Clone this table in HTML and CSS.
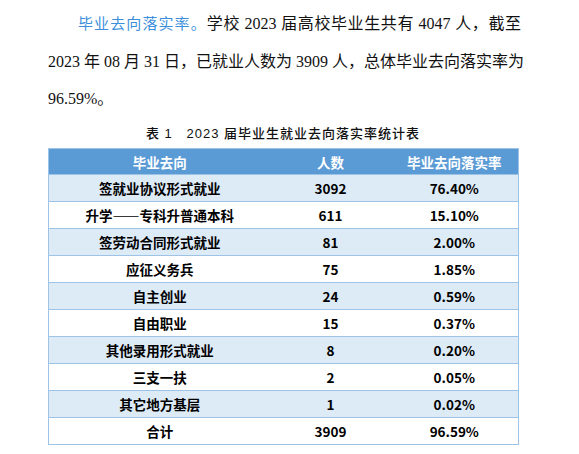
FILE: index.html
```html
<!DOCTYPE html>
<html lang="zh-CN">
<head>
<meta charset="utf-8">
<link rel="stylesheet" href="styles.css">
</head>
<body>
<div class="page">
  <div class="para">
    <div class="line first"><span class="hl">毕业去向落实率。</span>学校 2023 届高校毕业生共有 4047 人，截至</div>
    <div class="line">2023 年 08 月 31 日，已就业人数为 3909 人，总体毕业去向落实率为</div>
    <div class="line last">96.59%。</div>
  </div>
  <div class="caption">表 1&nbsp;&nbsp;&nbsp;2023 届毕业生就业去向落实率统计表</div>
  <table class="stats">
    <colgroup><col class="c1"><col class="c2"><col class="c3"></colgroup>
    <thead>
      <tr><th>毕业去向</th><th>人数</th><th>毕业去向落实率</th></tr>
    </thead>
    <tbody>
      <tr class="alt"><td>签就业协议形式就业</td><td>3092</td><td>76.40%</td></tr>
      <tr><td>升学——专科升普通本科</td><td>611</td><td>15.10%</td></tr>
      <tr class="alt"><td>签劳动合同形式就业</td><td>81</td><td>2.00%</td></tr>
      <tr><td>应征义务兵</td><td>75</td><td>1.85%</td></tr>
      <tr class="alt"><td>自主创业</td><td>24</td><td>0.59%</td></tr>
      <tr><td>自由职业</td><td>15</td><td>0.37%</td></tr>
      <tr class="alt"><td>其他录用形式就业</td><td>8</td><td>0.20%</td></tr>
      <tr><td>三支一扶</td><td>2</td><td>0.05%</td></tr>
      <tr class="alt"><td>其它地方基层</td><td>1</td><td>0.02%</td></tr>
      <tr><td>合计</td><td>3909</td><td>96.59%</td></tr>
    </tbody>
  </table>
</div>
</body>
</html>
```
FILE: styles.css
```css
html, body {
  margin: 0;
  padding: 0;
  background: #ffffff;
}
.page {
  padding-left: 48px;
  width: 473px;
}
.para {
  padding-top: 5px;
  font-family: "Liberation Serif", "Noto Sans CJK SC", serif;
  font-size: 16px;
  line-height: 37px;
  color: #111;
}
.line {
  text-align: justify;
  text-align-last: justify;
  white-space: nowrap;
}
.line.first {
  text-indent: 30px;
}
.line.last {
  text-align-last: left;
}
.hl {
  color: #3d8fdc;
  font-size: 15px;
  letter-spacing: 0.5px;
}
.caption {
  margin-top: 7px;
  width: 470px;
  text-align: center;
  font-family: "Liberation Sans", "Noto Sans CJK SC", sans-serif;
  font-size: 13px;
  font-weight: 500;
  letter-spacing: 1px;
  line-height: 20px;
  color: #111;
}
.stats {
  margin-top: 4px;
  width: 470px;
  border-collapse: collapse;
  table-layout: fixed;
  border: 1px solid #9dc3e6;
  font-family: "Noto Sans CJK SC", sans-serif;
  font-size: 13.5px;
  font-weight: 700;
  color: #000;
}
.c1 { width: 222px; }
.c2 { width: 120px; }
.c3 { width: 128px; }
.stats th {
  background: #5b9bd5;
  color: #ffffff;
  height: 25px;
  padding: 0;
  font-weight: 700;
  text-align: center;
  border-bottom: 1px solid #9dc3e6;
}
.stats td {
  height: 26px;
  padding: 0;
  text-align: center;
  border-bottom: 1px solid #9dc3e6;
}
.stats tr.alt td {
  background: #ddebf7;
}
```
